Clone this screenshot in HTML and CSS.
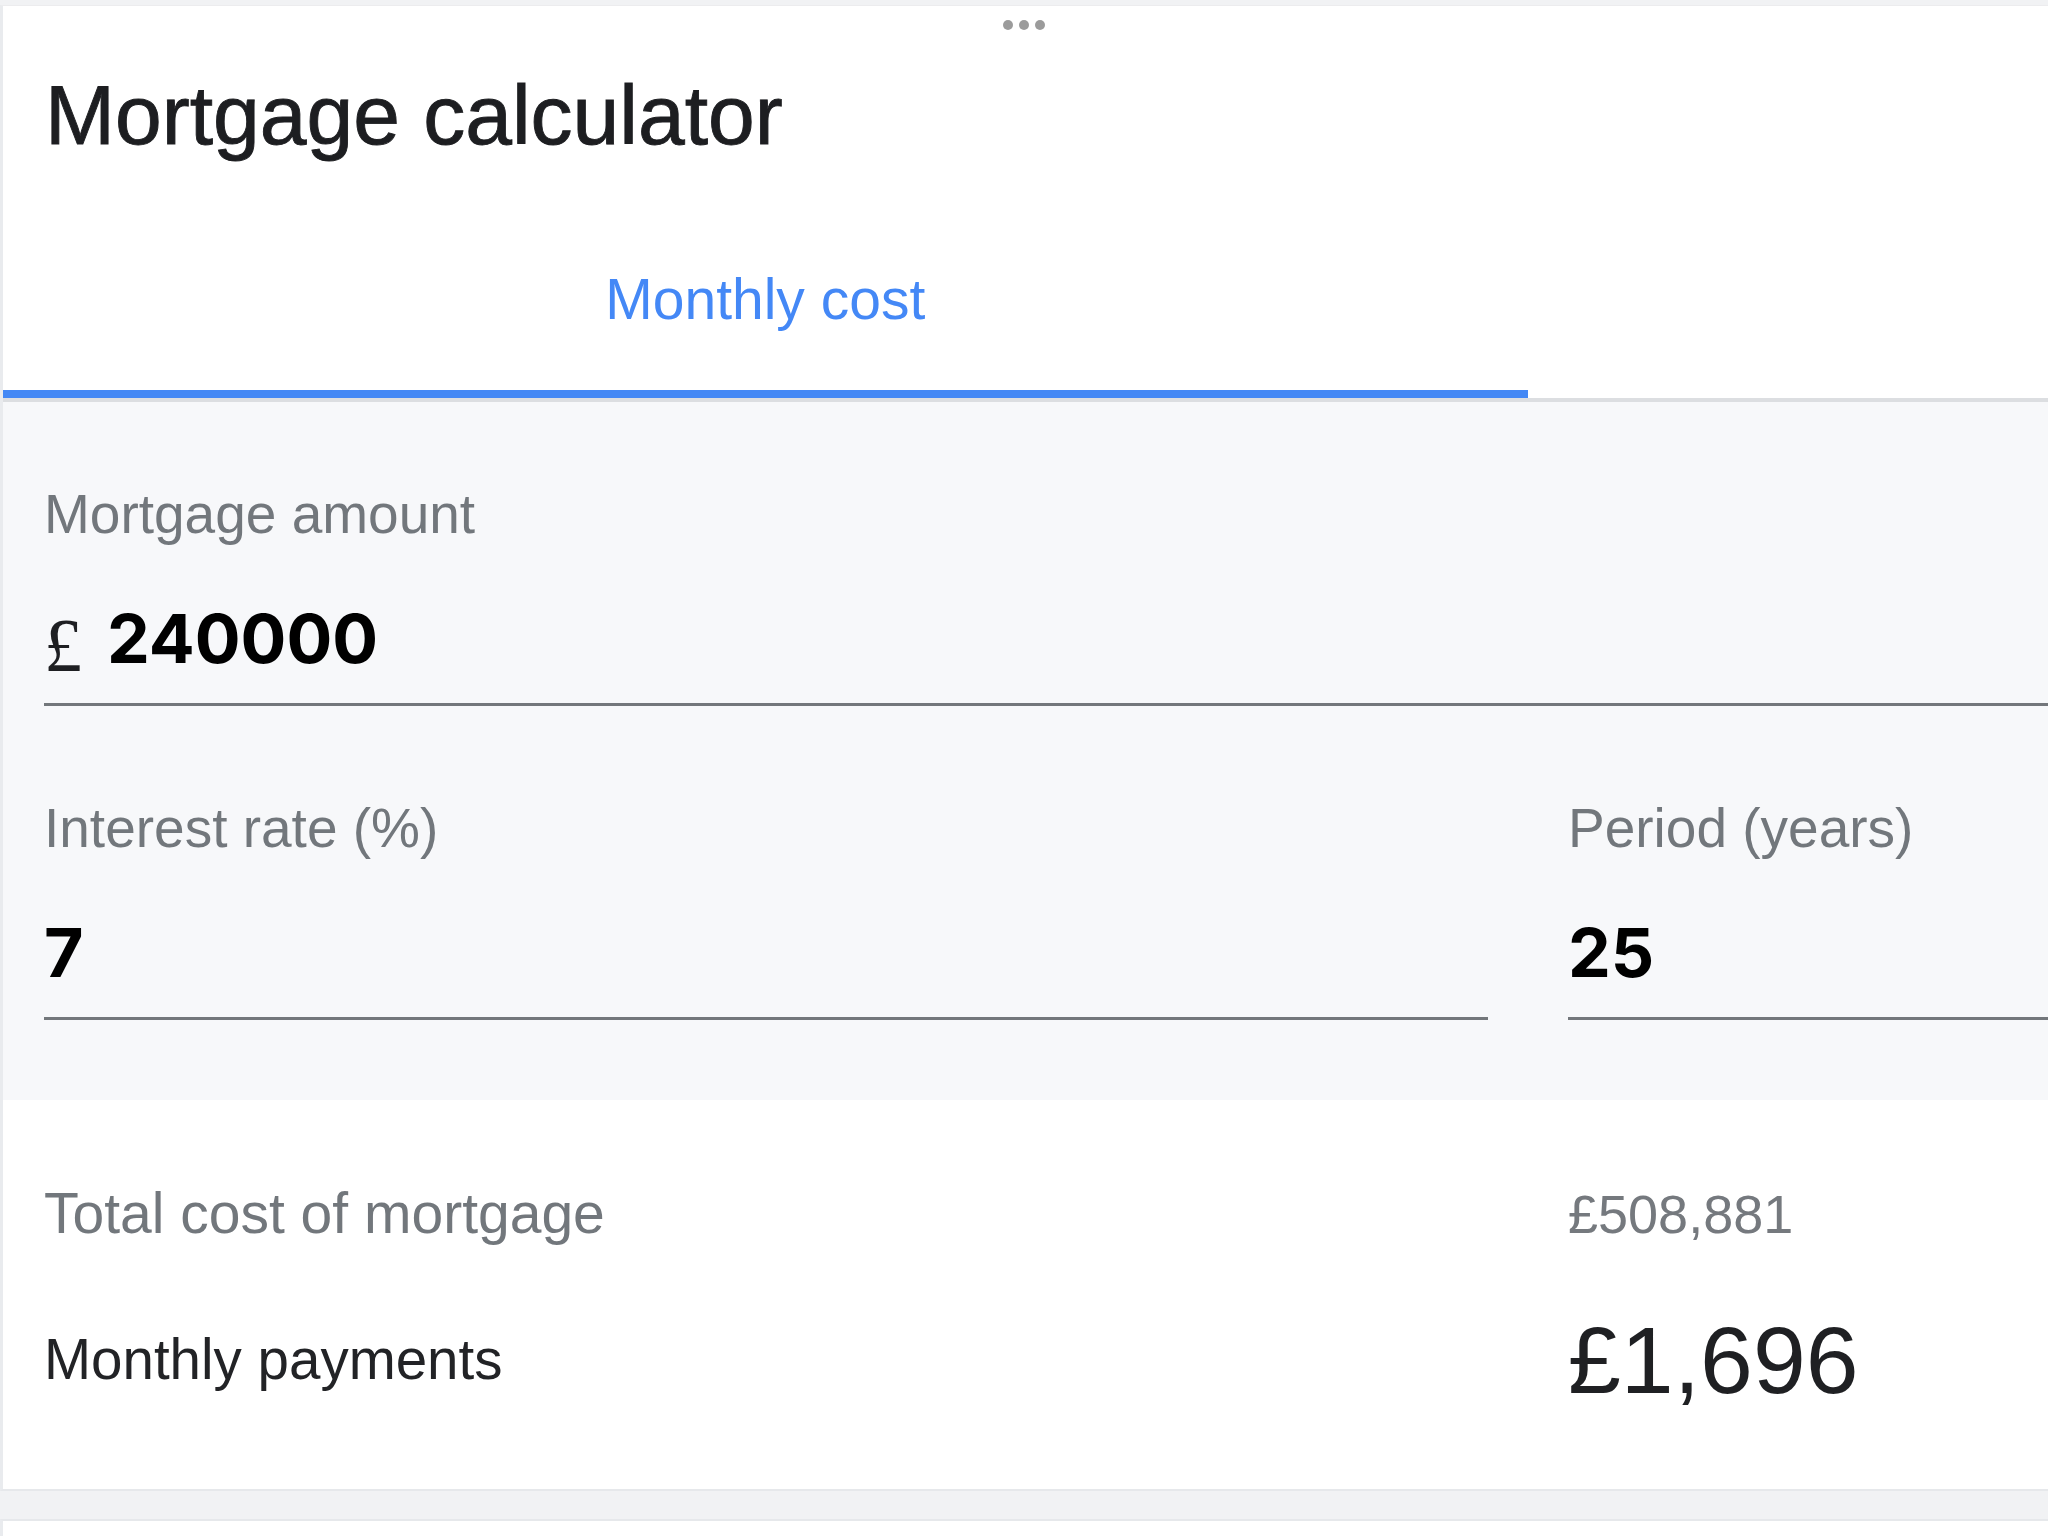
FILE: index.html
```html
<!DOCTYPE html>
<html lang="en">
<head>
<meta charset="utf-8">
<title>Mortgage calculator</title>
<link rel="stylesheet" href="styles.css">
</head>
<body>
<div class="page">
<div class="card">
  <div class="handle"><span class="dot"></span><span class="dot"></span><span class="dot"></span></div>
  <h1 class="title">Mortgage calculator</h1>
  <div class="tabs">
    <div class="tab active">Monthly cost</div>
    <div class="tab"></div>
  </div>
  <div class="form">
    <div class="field full">
      <div class="label">Mortgage amount</div>
      <div class="input"><span class="prefix">£</span><span class="value">240000</span></div>
    </div>
    <div class="field">
      <div class="label">Interest rate (%)</div>
      <div class="input"><span class="value">7</span></div>
    </div>
    <div class="field">
      <div class="label">Period (years)</div>
      <div class="input"><span class="value">25</span></div>
    </div>
  </div>
  <div class="results">
    <div class="row">
      <div class="res-label">Total cost of mortgage</div>
      <div class="res-total">£508,881</div>
    </div>
    <div class="row big">
      <div class="res-label dark">Monthly payments</div>
      <div class="res-monthly">£1,696</div>
    </div>
  </div>
</div>
<div class="band"></div>
<div class="card next"></div>
</div>
</body>
</html>
```

FILE: styles.css
```css
html, body {
  margin: 0;
  padding: 0;
  overflow: hidden;
}
body {
  background: #f1f2f4;
  font-family: "Liberation Sans", Arial, Helvetica, sans-serif;
}
.page {
  width: 2048px;
  height: 1536px;
  overflow: hidden;
}
.card {
  width: 3049px;
  margin-top: 5px;
  background: #ffffff;
  border-left: 3px solid #e9ebee;
  border-top: 1px solid #ececee;
  border-bottom: 2px solid #e6e8eb;
}
.handle {
  width: 2042px;
  padding-top: 14px;
  display: flex;
  justify-content: center;
  gap: 6px;
}
.dot {
  width: 10px;
  height: 10px;
  border-radius: 50%;
  background: #9b9b9b;
}
.title {
  margin: 35px 0 0 0;
  padding-left: 42px;
  font-size: 84px;
  line-height: 100px;
  font-weight: 400;
  color: #1d1e21;
  -webkit-text-stroke: 0.9px #1d1e21;
}
.tabs {
  display: flex;
  border-bottom: 4px solid #dcdee1;
}
.tab {
  width: 1525px;
  text-align: center;
  font-size: 57px;
  line-height: 70px;
  color: #4488f6;
}
.tab.active {
  padding: 99px 0 56px 0;
  border-bottom: 8px solid #4388f5;
}
.form {
  background: #f7f8fa;
  padding: 80px 0 80px 41px;
  display: grid;
  grid-template-columns: 1444px 1fr;
  column-gap: 80px;
  row-gap: 90px;
}
.field.full {
  grid-column: 1 / -1;
}
.label {
  font-size: 55px;
  line-height: 64px;
  color: #72777c;
}
.input {
  margin-top: 50px;
  padding-bottom: 23px;
  border-bottom: 3px solid #73777b;
  line-height: 84px;
  height: 84px;
  white-space: nowrap;
}
.prefix {
  font-family: "Liberation Serif", "Times New Roman", serif;
  font-size: 76px;
  color: #1e1f22;
  margin-right: 25px;
  vertical-align: -0.11em;
}
.value {
  font-family: Inter, "Liberation Sans", sans-serif;
  font-weight: 700;
  font-size: 68px;
  color: #000000;
}
.results {
  padding: 80px 0 74px 41px;
  display: flex;
  flex-direction: column;
  gap: 58px;
}
.row {
  display: grid;
  grid-template-columns: 1444px 1fr;
  column-gap: 80px;
  align-items: baseline;
}
.row.big {
  align-items: center;
}
.res-label {
  font-size: 57px;
  line-height: 66px;
  color: #72777c;
}
.res-label.dark {
  font-size: 56.5px;
  color: #222326;
}
.res-total {
  font-size: 54px;
  line-height: 66px;
  color: #75797e;
}
.res-monthly {
  font-size: 95px;
  line-height: 110px;
  color: #1f2023;
}
.band {
  height: 28px;
}
.card.next {
  margin-top: 0;
  height: 200px;
  border-top: 2px solid #e6e8eb;
}
```
